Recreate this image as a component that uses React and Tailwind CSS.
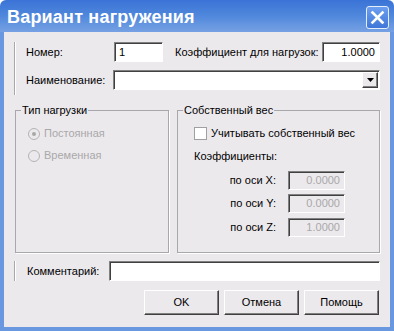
import React from 'react'

const FONT = { fontFamily: '"Liberation Sans", Arial, sans-serif' }

const sunken = 'border border-t-[#808080] border-l-[#808080] border-b-white border-r-white shadow-[inset_1px_1px_0_#404040]'
const raised = 'border border-t-white border-l-white border-r-[#404040] border-b-[#404040] shadow-[inset_-1px_-1px_0_#808080]'

function Radio({ checked, label }) {
  return (
    <div className="flex items-center h-[13px] gap-[4px]">
      <div className="w-[12px] h-[12px] rounded-full border border-[#b4b4b4] bg-[#ece9ed] flex items-center justify-center">
        {checked && <div className="w-[4px] h-[4px] rounded-full bg-[#a8a8a8]" />}
      </div>
      <span className="text-[#a8a8a8]">{label}</span>
    </div>
  )
}

function AxisRow({ label, value, className = '' }) {
  return (
    <div className={`flex items-center h-[19px] ${className}`}>
      <span className="w-[93px] text-right">{label}</span>
      <div className={`ml-[12px] w-[57px] h-[19px] ${sunken} bg-[#ece9ed] text-[#a8a8a8] text-right pr-[4px] leading-[17px]`}>
        {value}
      </div>
    </div>
  )
}

function Button({ children }) {
  return (
    <button className={`w-[75px] h-[25px] ${raised} bg-[#ece9ed] text-black text-[11px]`}>
      {children}
    </button>
  )
}

export default function App() {
  return (
    <div className="w-[394px] h-[331px] flex flex-col overflow-hidden text-[11px] text-black" style={FONT}>
      {/* Title bar */}
      <div className="h-[32px] shrink-0 flex items-center justify-between pl-[7px] pr-[5px] rounded-t-[6px] bg-gradient-to-b from-[#3a73d6] via-[#5088dc] to-[#76a1e3]">
        <span className="text-white font-bold text-[18px] tracking-[0.2px] mt-[2px]">Вариант нагружения</span>
        <div className="w-[23px] h-[23px] mt-[3px] rounded-[3px] border border-[#e6eefa] bg-gradient-to-b from-[#6d9ff0] to-[#3f77d8] flex items-center justify-center">
          <svg width="15" height="15" viewBox="0 0 15 15">
            <path d="M2.5 2.5 L12.5 12.5 M12.5 2.5 L2.5 12.5" stroke="#fff" strokeWidth="2.6" strokeLinecap="square" />
          </svg>
        </div>
      </div>

      {/* Body */}
      <div className="flex-1 flex flex-col bg-[#ece9ed] border-x-4 border-b-4 border-[#6a98e0]">
        {/* Top section */}
        <div className="mt-[10px] ml-[10px] mr-[10px] pb-[5px] border-l border-[#a8a8ac] shadow-[inset_1px_0_0_#fff]">
          <div className="flex items-center h-[20px]">
            <span className="w-[99px] pl-[11px]">Номер:</span>
            <div className={`w-[49px] h-[20px] ${sunken} bg-white pl-[4px] leading-[18px]`}>1</div>
            <span className="ml-[12px]">Коэффициент для нагрузок:</span>
            <div className={`ml-auto w-[58px] h-[20px] ${sunken} bg-white text-right pr-[4px] leading-[18px]`}>1.0000</div>
          </div>
          <div className="flex items-center h-[20px] mt-[8px]">
            <span className="w-[98px] pl-[11px]">Наименование:</span>
            <div className={`flex-1 h-[20px] ${sunken} bg-white flex justify-end items-center pr-[1px]`}>
              <div className={`w-[16px] h-[16px] ${raised} bg-[#ece9ed] flex items-center justify-center`}>
                <svg width="7" height="4" viewBox="0 0 7 4"><path d="M0 0 H7 L3.5 4 Z" fill="#000" /></svg>
              </div>
            </div>
          </div>
        </div>

        {/* Group boxes */}
        <div className="flex mt-[9px] ml-[11px] gap-[8px]">
          <fieldset className="w-[154px] h-[149px] border border-[#a8a8ac] shadow-[1px_1px_0_#fff] pl-[5px] pr-0 pb-0">
            <legend className="px-[1px] leading-[13px]">Тип нагрузки</legend>
            <div className="mt-[10px] ml-[7px] flex flex-col gap-[9px]">
              <Radio checked label="Постоянная" />
              <Radio label="Временная" />
            </div>
          </fieldset>
          <fieldset className="w-[203px] h-[149px] border border-[#a8a8ac] shadow-[1px_1px_0_#fff] pl-[5px] pr-0 pb-0">
            <legend className="px-[1px] leading-[13px]">Собственный вес</legend>
            <div className="mt-[10px] ml-[11px] flex items-center h-[13px] gap-[4px]">
              <div className="w-[13px] h-[13px] border border-[#a0a0a0] bg-white" />
              <span>Учитывать собственный вес</span>
            </div>
            <div className="mt-[10px] ml-[11px] h-[13px] leading-[13px]">Коэффициенты:</div>
            <AxisRow className="mt-[8px]" label="по оси X:" value="0.0000" />
            <AxisRow className="mt-[4px]" label="по оси Y:" value="0.0000" />
            <AxisRow className="mt-[5px]" label="по оси Z:" value="1.0000" />
          </fieldset>
        </div>

        {/* Comment */}
        <div className="mt-[8px] ml-[10px] mr-[10px] flex items-center h-[20px] border-l border-[#a8a8ac] shadow-[inset_1px_0_0_#fff]">
          <span className="w-[94px] pl-[12px]">Комментарий:</span>
          <div className={`flex-1 h-[20px] ${sunken} bg-white`} />
        </div>

        {/* Buttons */}
        <div className="mt-[9px] mr-[11px] flex justify-end gap-[5px]">
          <Button>OK</Button>
          <Button>Отмена</Button>
          <Button>Помощь</Button>
        </div>
      </div>
    </div>
  )
}
